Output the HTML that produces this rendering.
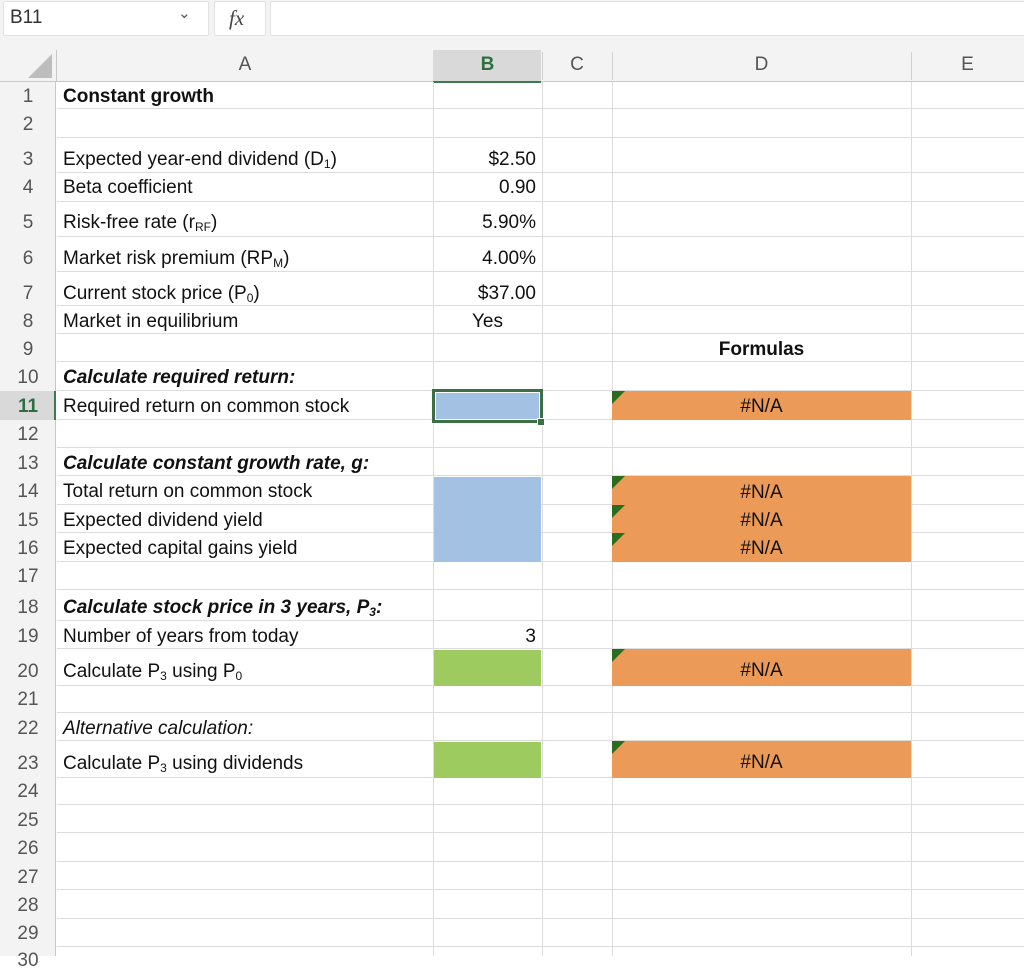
<!DOCTYPE html>
<html><head><meta charset="utf-8"><style>
body{margin:0;width:1024px;height:956px;overflow:hidden;background:#fff;font-family:"Liberation Sans",Arial,sans-serif;position:relative}
.a{position:absolute}
.fb{top:0;left:0;width:1024px;height:46px;background:#f3f3f3}
.box{background:#fff;border:1px solid #e2e2e2;height:33px;top:1px;border-radius:2px}
.hdr{top:46px;left:0;width:1024px;height:36px;background:#f3f3f3;border-bottom:1px solid #c8c8c8;box-sizing:border-box}
.ch{top:50px;height:31px;text-align:center;font-size:19px;color:#555;line-height:26px}
.rh{left:0;width:56px;background:#f3f3f3;border-right:1px solid #c8c8c8;text-align:center;font-size:19px;color:#555;box-sizing:border-box}
.row{left:57px;width:967px;border-bottom:1px solid #dcdcdc;box-sizing:border-box}
.vl{top:82px;bottom:0;width:1px;background:#dcdcdc}
.t{font-size:19px;color:#111;white-space:nowrap;margin-top:2px}
sub{font-size:12px;vertical-align:-3px}
.na{background:#eb9a57;text-align:center;font-size:19px;color:#111}
.tri{position:absolute;left:0;top:0;width:0;height:0;border-top:13px solid #2d6b1e;border-right:13px solid transparent}
</style></head><body>
<div class="a fb"></div>
<div class="a box" style="left:3px;width:204px;"></div>
<div class="a" style="left:10px;top:7px;font-size:19px;color:#333">B11</div>
<div class="a" style="left:178px;top:4px;font-size:15px;color:#555">&#8964;</div>
<div class="a box" style="left:214px;width:50px;"></div>
<div class="a" style="left:229px;top:6px;font-size:21px;font-style:italic;font-family:'Liberation Serif',serif;color:#444">fx</div>
<div class="a box" style="left:270px;width:760px;"></div>
<div class="a hdr"></div>
<div class="a" style="left:28px;top:54px;width:0;height:0;border-bottom:24px solid #bdbdbd;border-left:24px solid transparent"></div>
<div class="a" style="left:56px;top:50px;width:1px;height:32px;background:#c8c8c8"></div>
<div class="a" style="left:433px;top:50px;width:108px;height:31px;background:#d9d9d9;border-bottom:2px solid #3b7a4b"></div>
<div class="a ch" style="left:57px;width:376px;top:52px">A</div>
<div class="a ch" style="left:433px;width:109px;color:#2f6f3f;font-weight:bold;top:52px">B</div>
<div class="a ch" style="left:542px;width:70px;top:52px">C</div>
<div class="a ch" style="left:612px;width:299px;top:52px">D</div>
<div class="a ch" style="left:911px;width:113px;top:52px">E</div>
<div class="a" style="left:542px;top:52px;width:1px;height:28px;background:#d0d0d0"></div>
<div class="a" style="left:612px;top:52px;width:1px;height:28px;background:#d0d0d0"></div>
<div class="a" style="left:911px;top:52px;width:1px;height:28px;background:#d0d0d0"></div>
<div class="a vl" style="left:433px"></div>
<div class="a vl" style="left:542px"></div>
<div class="a vl" style="left:612px"></div>
<div class="a vl" style="left:911px"></div>

<div class="a row" style="top:82px;height:27px"></div>
<div class="a row" style="top:109px;height:29px"></div>
<div class="a row" style="top:138px;height:35px"></div>
<div class="a row" style="top:173px;height:29px"></div>
<div class="a row" style="top:202px;height:35px"></div>
<div class="a row" style="top:237px;height:35px"></div>
<div class="a row" style="top:272px;height:34px"></div>
<div class="a row" style="top:306px;height:28px"></div>
<div class="a row" style="top:334px;height:28px"></div>
<div class="a row" style="top:362px;height:29px"></div>
<div class="a row" style="top:391px;height:29px"></div>
<div class="a row" style="top:420px;height:28px"></div>
<div class="a row" style="top:448px;height:28px"></div>
<div class="a row" style="top:476px;height:29px"></div>
<div class="a row" style="top:505px;height:28px"></div>
<div class="a row" style="top:533px;height:29px"></div>
<div class="a row" style="top:562px;height:28px"></div>
<div class="a row" style="top:590px;height:31px"></div>
<div class="a row" style="top:621px;height:28px"></div>
<div class="a row" style="top:649px;height:37px"></div>
<div class="a row" style="top:686px;height:27px"></div>
<div class="a row" style="top:713px;height:28px"></div>
<div class="a row" style="top:741px;height:37px"></div>
<div class="a row" style="top:778px;height:27px"></div>
<div class="a row" style="top:805px;height:28px"></div>
<div class="a row" style="top:833px;height:29px"></div>
<div class="a row" style="top:862px;height:28px"></div>
<div class="a row" style="top:890px;height:29px"></div>
<div class="a row" style="top:919px;height:28px"></div>

<div class="a rh" style="top:82px;height:874px"></div>
<div class="a" style="left:0;top:391px;width:56px;height:29px;background:#d9d9d9;border-right:2px solid #3b7a4b;box-sizing:border-box"></div>

<div class="a" style="left:434px;top:392px;width:107px;height:28px;background:#a3c1e3"></div>
<div class="a" style="left:432px;top:389px;width:105px;height:28px;border:3px solid #3d6f47;box-shadow:inset 0 0 0 1px #fff"></div>
<div class="a" style="left:537px;top:418px;width:6px;height:6px;background:#3d6f47;border:1px solid #fff"></div>
<div class="a" style="left:434px;top:477px;width:107px;height:85px;background:#a3c1e3"></div>
<div class="a" style="left:434px;top:650px;width:107px;height:36px;background:#9ecb60"></div>
<div class="a" style="left:434px;top:742px;width:107px;height:36px;background:#9ecb60"></div>

<div class="a na" style="left:612px;top:391px;width:299px;height:29px;line-height:32px"><div class="tri"></div>#N/A</div>
<div class="a na" style="left:612px;top:476px;width:299px;height:86px"></div>
<div class="a na" style="left:612px;top:476px;width:299px;height:29px;line-height:34px;background:none"><div class="tri"></div>#N/A</div>
<div class="a na" style="left:612px;top:505px;width:299px;height:28px;line-height:32px;background:none"><div class="tri"></div>#N/A</div>
<div class="a na" style="left:612px;top:533px;width:299px;height:29px;line-height:32px;background:none"><div class="tri"></div>#N/A</div>
<div class="a na" style="left:612px;top:649px;width:299px;height:37px;line-height:44px"><div class="tri"></div>#N/A</div>
<div class="a na" style="left:612px;top:741px;width:299px;height:37px;line-height:44px"><div class="tri"></div>#N/A</div>

<div class="a t" style="left:0;width:56px;text-align:center;color:#555;top:84px">1</div>
<div class="a t" style="left:0;width:56px;text-align:center;color:#555;top:112px">2</div>
<div class="a t" style="left:0;width:56px;text-align:center;color:#555;top:147px">3</div>
<div class="a t" style="left:0;width:56px;text-align:center;color:#555;top:175px">4</div>
<div class="a t" style="left:0;width:56px;text-align:center;color:#555;top:210px">5</div>
<div class="a t" style="left:0;width:56px;text-align:center;color:#555;top:246px">6</div>
<div class="a t" style="left:0;width:56px;text-align:center;color:#555;top:281px">7</div>
<div class="a t" style="left:0;width:56px;text-align:center;color:#555;top:309px">8</div>
<div class="a t" style="left:0;width:56px;text-align:center;color:#555;top:337px">9</div>
<div class="a t" style="left:0;width:56px;text-align:center;color:#555;top:365px">10</div>
<div class="a t" style="left:0;width:56px;text-align:center;color:#2f6f3f;font-weight:bold;top:394px">11</div>
<div class="a t" style="left:0;width:56px;text-align:center;color:#555;top:422px">12</div>
<div class="a t" style="left:0;width:56px;text-align:center;color:#555;top:451px">13</div>
<div class="a t" style="left:0;width:56px;text-align:center;color:#555;top:479px">14</div>
<div class="a t" style="left:0;width:56px;text-align:center;color:#555;top:508px">15</div>
<div class="a t" style="left:0;width:56px;text-align:center;color:#555;top:536px">16</div>
<div class="a t" style="left:0;width:56px;text-align:center;color:#555;top:564px">17</div>
<div class="a t" style="left:0;width:56px;text-align:center;color:#555;top:595px">18</div>
<div class="a t" style="left:0;width:56px;text-align:center;color:#555;top:624px">19</div>
<div class="a t" style="left:0;width:56px;text-align:center;color:#555;top:659px">20</div>
<div class="a t" style="left:0;width:56px;text-align:center;color:#555;top:687px">21</div>
<div class="a t" style="left:0;width:56px;text-align:center;color:#555;top:716px">22</div>
<div class="a t" style="left:0;width:56px;text-align:center;color:#555;top:751px">23</div>
<div class="a t" style="left:0;width:56px;text-align:center;color:#555;top:779px">24</div>
<div class="a t" style="left:0;width:56px;text-align:center;color:#555;top:808px">25</div>
<div class="a t" style="left:0;width:56px;text-align:center;color:#555;top:836px">26</div>
<div class="a t" style="left:0;width:56px;text-align:center;color:#555;top:865px">27</div>
<div class="a t" style="left:0;width:56px;text-align:center;color:#555;top:893px">28</div>
<div class="a t" style="left:0;width:56px;text-align:center;color:#555;top:921px">29</div>
<div class="a t" style="left:0;width:56px;text-align:center;color:#555;top:948px">30</div>

<div class="a t" style="left:63px;top:84px;font-weight:bold">Constant growth</div>
<div class="a t" style="left:63px;top:147px">Expected year-end dividend (D<sub>1</sub>)</div>
<div class="a t" style="left:63px;top:175px">Beta coefficient</div>
<div class="a t" style="left:63px;top:210px">Risk-free rate (r<sub>RF</sub>)</div>
<div class="a t" style="left:63px;top:246px">Market risk premium (RP<sub>M</sub>)</div>
<div class="a t" style="left:63px;top:281px">Current stock price (P<sub>0</sub>)</div>
<div class="a t" style="left:63px;top:309px">Market in equilibrium</div>
<div class="a t" style="left:63px;top:365px;font-weight:bold;font-style:italic">Calculate required return:</div>
<div class="a t" style="left:63px;top:394px">Required return on common stock</div>
<div class="a t" style="left:63px;top:451px;font-weight:bold;font-style:italic">Calculate constant growth rate, g:</div>
<div class="a t" style="left:63px;top:479px">Total return on common stock</div>
<div class="a t" style="left:63px;top:508px">Expected dividend yield</div>
<div class="a t" style="left:63px;top:536px">Expected capital gains yield</div>
<div class="a t" style="left:63px;top:595px;font-weight:bold;font-style:italic">Calculate stock price in 3 years, P<sub>3</sub>:</div>
<div class="a t" style="left:63px;top:624px">Number of years from today</div>
<div class="a t" style="left:63px;top:659px">Calculate P<sub>3</sub> using P<sub>0</sub></div>
<div class="a t" style="left:63px;top:716px;font-style:italic">Alternative calculation:</div>
<div class="a t" style="left:63px;top:751px">Calculate P<sub>3</sub> using dividends</div>

<div class="a t" style="left:433px;width:103px;text-align:right;top:147px">$2.50</div>
<div class="a t" style="left:433px;width:103px;text-align:right;top:175px">0.90</div>
<div class="a t" style="left:433px;width:103px;text-align:right;top:210px">5.90%</div>
<div class="a t" style="left:433px;width:103px;text-align:right;top:246px">4.00%</div>
<div class="a t" style="left:433px;width:103px;text-align:right;top:281px">$37.00</div>
<div class="a t" style="left:433px;width:109px;text-align:center;top:309px">Yes</div>
<div class="a t" style="left:433px;width:103px;text-align:right;top:624px">3</div>
<div class="a t" style="left:612px;width:299px;text-align:center;top:337px;font-weight:bold">Formulas</div>
</body></html>
